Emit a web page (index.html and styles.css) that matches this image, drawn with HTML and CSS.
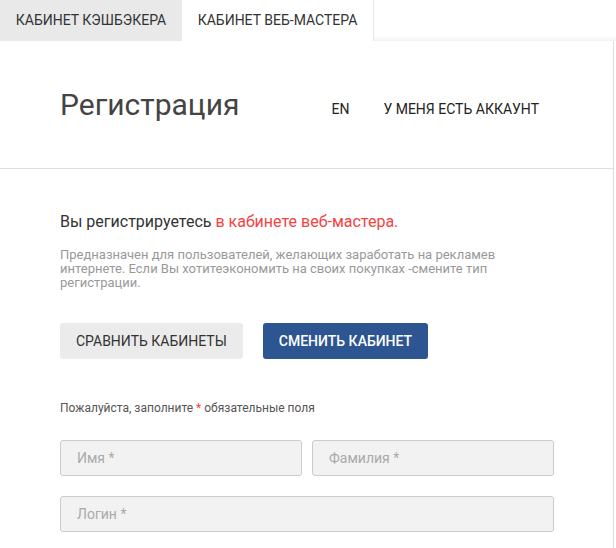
FILE: index.html
```html
<!DOCTYPE html>
<html lang="ru">
<head>
    <meta charset="UTF-8">
    <meta name="viewport" content="width=device-width, initial-scale=1.0">
    <title>Регистрация</title>
    <link rel="stylesheet" href="styles.css">
</head>
<body>
    <div class="tabs">
        <div class="tab">Кабинет кэшбэкера</div>
        <div class="tab active">Кабинет веб-мастера</div>
        <div class="tabs-rest"></div>
    </div>
    <div class="card">
        <div class="card-header">
            <h1>Регистрация</h1>
            <a class="lang" href="#">EN</a>
            <a class="login" href="#">У меня есть аккаунт</a>
        </div>
        <div class="card-body">
            <p class="lead">Вы регистрируетесь <span class="red">в кабинете веб-мастера.</span></p>
            <p class="note">Предназначен для пользователей, желающих заработать на рекламев интернете. Если Вы хотитеэкономить на своих покупках -смените тип регистрации.</p>
            <div class="buttons">
                <button class="btn btn-gray">Сравнить кабинеты</button>
                <button class="btn btn-blue">Сменить кабинет</button>
            </div>
            <p class="required">Пожалуйста, заполните <span class="red">*</span> обязательные поля</p>
            <div class="row">
                <input type="text" placeholder="Имя *">
                <input type="text" placeholder="Фамилия *">
            </div>
            <div class="row">
                <input type="text" placeholder="Логин *">
            </div>
        </div>
    </div>
</body>
</html>
```

FILE: styles.css
```css
body {
    font-family: Roboto, "Liberation Sans", sans-serif;
    background-color: #fff;
    margin: 0;
    color: #333;
}
.tabs {
    display: flex;
    height: 41px;
}
.tab {
    width: 182px;
    line-height: 41px;
    text-align: center;
    font-size: 14px;
    text-transform: uppercase;
    color: #333;
    background: #e9e9e9;
}
.tab.active {
    width: 191px;
    background: #fff;
}
.tabs-rest {
    flex: 1;
    border-left: 1px solid #e6e6e6;
    box-shadow: inset 0 -5px 4px -3px rgba(0, 0, 0, 0.07);
}
.card {
    width: 613px;
    border-right: 1px solid #ddd;
    min-height: 507px;
}
.card-header {
    display: flex;
    align-items: center;
    height: 127px;
    padding-left: 60px;
    border-bottom: 1px solid #ddd;
}
h1 {
    margin: 0;
    font-size: 30px;
    font-weight: 400;
    color: #444;
}
.lang, .login {
    font-size: 14px;
    color: #222;
    text-decoration: none;
    text-transform: uppercase;
    margin-top: 9px;
}
.lang {
    margin-left: 92px;
}
.login {
    margin-left: 34px;
}
.card-body {
    padding: 43px 0 0 60px;
    width: 494px;
}
.lead {
    margin: 0;
    font-size: 16px;
    color: #333;
}
.red {
    color: #f44242;
}
.note {
    margin: 17px 0 0;
    font-size: 13px;
    line-height: 14px;
    color: #999;
}
.buttons {
    display: flex;
    gap: 20px;
    margin-top: 33px;
}
.btn {
    height: 36px;
    padding: 0 16px;
    border: none;
    border-radius: 3px;
    font-family: inherit;
    font-size: 14px;
    text-transform: uppercase;
}
.btn-gray {
    background-color: #ebebeb;
    color: #333;
}
.btn-blue {
    background-color: #2c5591;
    color: #fff;
    font-weight: 500;
}
.required {
    margin: 42px 0 0;
    font-size: 12px;
    color: #555;
}
.row {
    display: flex;
    gap: 10px;
    margin-top: 25px;
}
.row + .row {
    margin-top: 20px;
}
input {
    flex: 1;
    min-width: 0;
    height: 36px;
    box-sizing: border-box;
    padding: 0 16px;
    background: #f2f2f2;
    border: 1px solid #ccc;
    border-radius: 3px;
    font-family: inherit;
    font-size: 14px;
}
input::placeholder {
    color: #aaa;
}
```
